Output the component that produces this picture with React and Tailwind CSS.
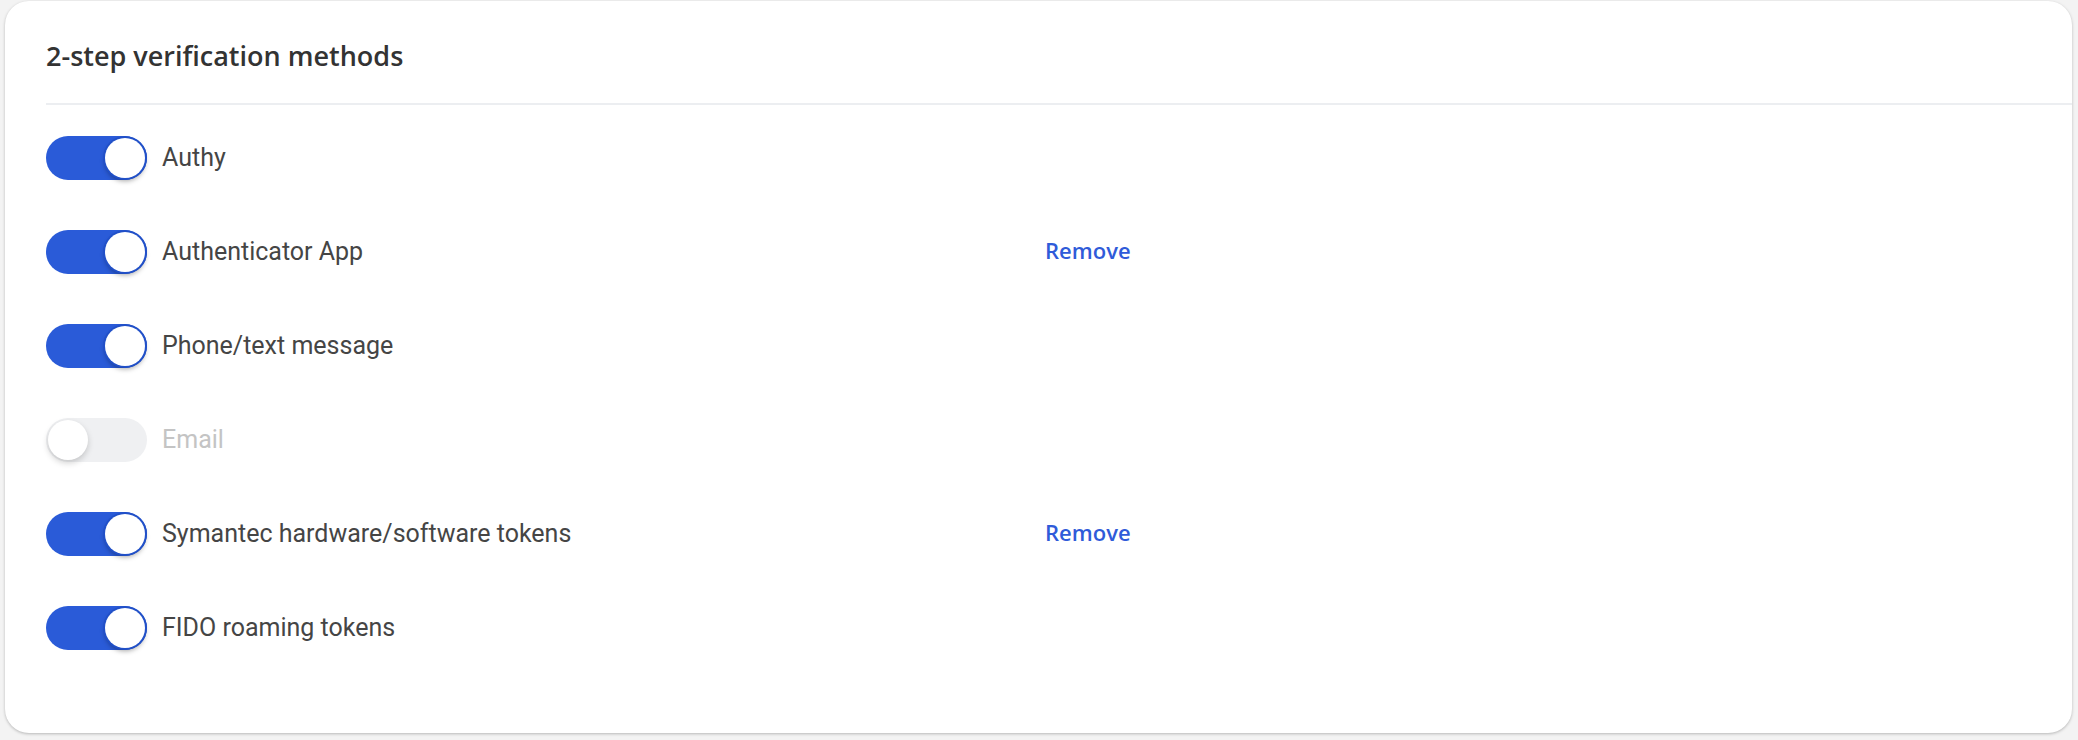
import React from "react";

const methods = [
  { label: "Authy", on: true },
  { label: "Authenticator App", on: true, remove: true },
  { label: "Phone/text message", on: true },
  { label: "Email", on: false },
  { label: "Symantec hardware/software tokens", on: true, remove: true },
  { label: "FIDO roaming tokens", on: true },
];

const Toggle = ({ on }) => {
  return (
    <div
      className={
        on
          ? "flex h-[44px] w-[101px] shrink-0 items-center justify-end rounded-full bg-[#2a5bd8] px-[2px]"
          : "flex h-[44px] w-[101px] shrink-0 items-center justify-start rounded-full bg-[#eff0f2] px-[2px]"
      }
    >
      <div
        className={
          on
            ? "h-[40px] w-[40px] rounded-full bg-white shadow-[0_3px_5px_rgba(0,0,0,0.35)] ring-2 ring-[#2150c8]"
            : "h-[40px] w-[40px] rounded-full bg-white shadow-[0_3px_6px_rgba(0,0,0,0.18)]"
        }
      />
    </div>
  );
};

const App = () => {
  return (
    <div className="h-[740px] w-[2078px] bg-[#f3f3f3] pb-[7px] pl-[5px] pr-[6px] pt-[1px]">
      <div className="flex h-full flex-col rounded-[24px] bg-white shadow-[0_1px_3px_rgba(0,0,0,0.25)]">
        <div
          className="px-[41px] pb-[28px] pt-[36px] text-[27px] font-semibold leading-[38px] text-[#333333]"
          style={{ fontFamily: "'Open Sans', sans-serif" }}
        >
          2-step verification methods
        </div>
        <div className="ml-[41px] h-[2px] bg-[#eceef1]" />

        <ul className="mt-[31px] flex flex-col gap-[50px] px-[41px]">
          {methods.map((m) => (
            <li key={m.label} className="flex h-[44px] items-center">
              <Toggle on={m.on} />
              <span
                className={
                  m.on
                    ? "ml-[15px] w-[883px] text-[25px] text-[#454545]"
                    : "ml-[15px] w-[883px] text-[25px] text-[#c4c4c4]"
                }
                style={{ fontFamily: "Roboto, sans-serif" }}
              >
                {m.label}
              </span>
              {m.remove && (
                <button
                  className="-mt-[3px] text-[22px] font-semibold text-[#2f5bd9]"
                  style={{ fontFamily: "'Open Sans', sans-serif" }}
                >
                  Remove
                </button>
              )}
            </li>
          ))}
        </ul>
      </div>
    </div>
  );
};

export default App;
